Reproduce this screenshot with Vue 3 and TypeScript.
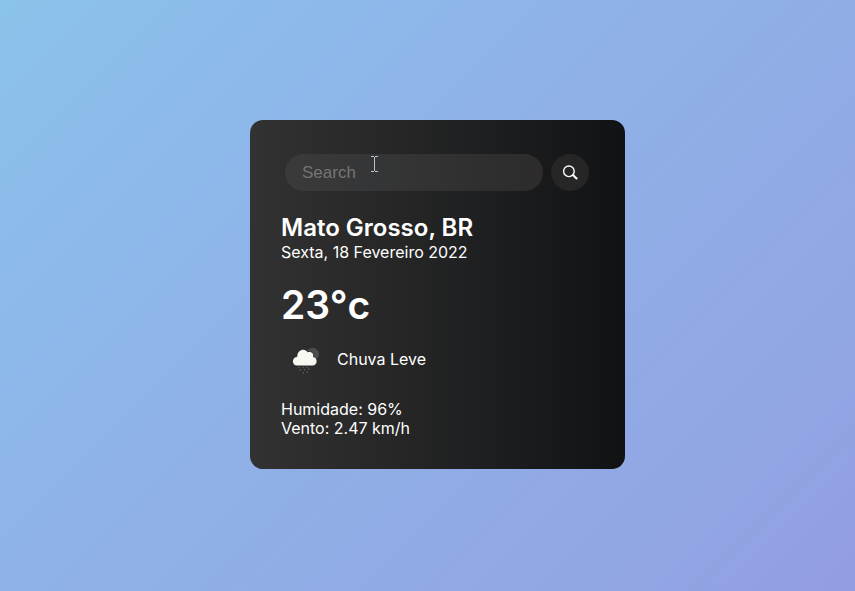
<script setup lang="ts">
import { ref } from 'vue'

interface Weather {
  city: string
  date: string
  temperature: number
  condition: string
  humidity: number
  wind: number
}

const query = ref('')
const weather = ref<Weather>({
  city: 'Mato Grosso, BR',
  date: 'Sexta, 18 Fevereiro 2022',
  temperature: 23,
  condition: 'Chuva Leve',
  humidity: 96,
  wind: 2.47,
})
</script>

<template>
  <main class="page">
    <section class="card">
      <form class="search" @submit.prevent>
        <div class="field">
          <input v-model="query" class="search-input" type="text" placeholder="Search" aria-label="Search" />
          <svg class="pointer" width="7" height="16" viewBox="0 0 7 16" aria-hidden="true">
            <path d="M0 .5H3M4 .5H7M3.5 1V15M0 15.5H3M4 15.5H7" fill="none" stroke="#b4c5d6" />
          </svg>
        </div>
        <button class="search-button" type="submit" aria-label="Search">
          <svg width="16" height="16" viewBox="0 0 16 16" aria-hidden="true">
            <circle cx="6.9" cy="6.3" r="5.3" fill="none" stroke="#fff" stroke-width="1.4" />
            <path d="M10.6 9.800L15.100 14" stroke="#fff" stroke-width="2.2" />
          </svg>
        </button>
      </form>

      <h1 class="city">{{ weather.city }}</h1>
      <p class="line">{{ weather.date }}</p>
      <p class="temperature">{{ weather.temperature }}°c</p>

      <div class="condition">
        <svg class="icon" width="50" height="50" viewBox="0 -1 50 50" aria-hidden="true">
          <circle cx="31.500" cy="19.200" r="6.4" fill="#4e4c4d" />
          <path
            d="M16 30.500C10.500 30.500 10.500 22 16.300 21.700C16 14 24.500 12.800 26.500 17.300C30.500 15.800 33 18.800 32 22C37 22.500 36.800 30.500 31.500 30.500Z"
            fill="#f8f8f2"
            stroke="#2b2b2b"
            stroke-width="1"
            paint-order="stroke"
          />
          <path
            d="M18 32L17.500 33M22.500 32L22 33M26.500 32L26 33M19.500 34.500L19 36M24 34L23.500 35.500M28 33.500L27.500 35M22.500 37L22 38.500M26.500 36.500L26 38"
            stroke="#626262"
            stroke-width="1.1"
          />
        </svg>
        <p class="line">{{ weather.condition }}</p>
      </div>

      <p class="line">Humidade: {{ weather.humidity }}%</p>
      <p class="line">Vento: {{ weather.wind }} km/h</p>
    </section>
  </main>
</template>

<style>
body {
  margin: 0;
}
</style>

<style scoped>
.page {
  display: flex;
  align-items: center;
  justify-content: center;
  box-sizing: border-box;
  min-height: 100vh;
  padding: 0 0 2px 20px;
  background: linear-gradient(135deg, #8bc3ea 0%, #8db8ea 25%, #90aee6 55%, #91a6e5 82%, #939de1 100%);
  font-family: Inter, "Noto Sans", sans-serif;
  font-size: 16px;
  line-height: 19px;
  color: #fff;
}

.card {
  box-sizing: border-box;
  width: 100%;
  max-width: 375px;
  padding: 34px 32px 31px 31px;
  border-radius: 13px;
  background: linear-gradient(90deg, #323232 0%, #272727 36%, #202122 56%, #111213 100%);
}

.search {
  display: flex;
  justify-content: center;
  gap: 8px;
  margin-bottom: 22px;
}

.field {
  position: relative;
  width: 258px;
}

.search-input {
  display: block;
  box-sizing: border-box;
  width: 100%;
  height: 37px;
  padding: 0 17px;
  border: 0;
  border-radius: 19px;
  outline: 0;
  background: linear-gradient(90deg, #3a3a3b 0%, #353637 35%, #2d2b2b 100%);
  font-family: "Liberation Sans", sans-serif;
  font-size: 17px;
  color: #fff;
}

.search-input::placeholder {
  color: #757575;
}

.pointer {
  position: absolute;
  top: 2px;
  left: 86px;
}

.search-button {
  display: flex;
  align-items: center;
  justify-content: center;
  width: 38px;
  height: 37px;
  padding: 0;
  border: 0;
  border-radius: 50%;
  background: #262626;
}

.city {
  margin: 0;
  font-size: 24px;
  font-weight: 600;
  line-height: 30px;
}

.line {
  margin: 0;
}

.temperature {
  margin: 18px 0 5px;
  font-size: 39px;
  font-weight: 600;
  line-height: 49px;
}

.condition {
  display: flex;
  align-items: center;
  gap: 6px;
  margin-bottom: 16px;
}
</style>
